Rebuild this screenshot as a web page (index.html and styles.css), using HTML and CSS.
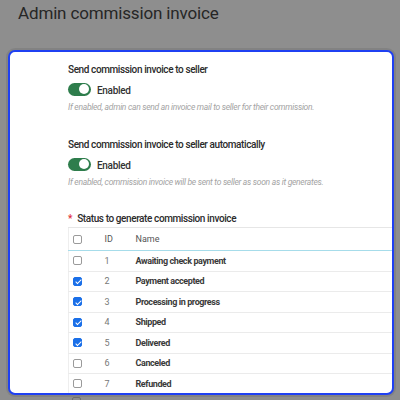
FILE: index.html
```html
<!DOCTYPE html>
<html lang="en">
<head>
    <meta charset="UTF-8">
    <title>Admin commission invoice</title>
    <link rel="stylesheet" href="styles.css">
</head>
<body>

    <h1 class="page-title">Admin commission invoice</h1>

    <div class="card">
        <div class="field">
            <div class="field-label">Send commission invoice to seller</div>
            <div class="switch-row">
                <span class="switch"><span class="knob"></span></span>
                <span class="switch-text">Enabled</span>
            </div>
            <div class="help">If enabled, admin can send an invoice mail to seller for their commission.</div>
        </div>

        <div class="field second">
            <div class="field-label">Send commission invoice to seller automatically</div>
            <div class="switch-row">
                <span class="switch"><span class="knob"></span></span>
                <span class="switch-text">Enabled</span>
            </div>
            <div class="help">If enabled, commission invoice will be sent to seller as soon as it generates.</div>
        </div>

        <div class="field-label status-label"><span class="req">*</span> Status to generate commission invoice</div>

        <table class="status-table">
            <thead>
                <tr>
                    <th class="col-check"><span class="cb"></span></th>
                    <th class="col-id">ID</th>
                    <th>Name</th>
                </tr>
            </thead>
            <tbody>
                <tr><td class="col-check"><span class="cb"></span></td><td class="col-id">1</td><td class="name">Awaiting check payment</td></tr>
                <tr><td class="col-check"><span class="cb on"></span></td><td class="col-id">2</td><td class="name">Payment accepted</td></tr>
                <tr><td class="col-check"><span class="cb on"></span></td><td class="col-id">3</td><td class="name">Processing in progress</td></tr>
                <tr><td class="col-check"><span class="cb on"></span></td><td class="col-id">4</td><td class="name">Shipped</td></tr>
                <tr><td class="col-check"><span class="cb on"></span></td><td class="col-id">5</td><td class="name">Delivered</td></tr>
                <tr><td class="col-check"><span class="cb"></span></td><td class="col-id">6</td><td class="name">Canceled</td></tr>
                <tr><td class="col-check"><span class="cb"></span></td><td class="col-id">7</td><td class="name">Refunded</td></tr>
            </tbody>
        </table>
    </div>

    <div class="below">
        <span class="cb dim"></span>
    </div>

</body>
</html>
```

FILE: styles.css
```css
* {
    box-sizing: border-box;
    margin: 0;
    padding: 0;
}
body {
    font-family: Roboto, "Noto Sans", sans-serif;
    background-color: #8e8e8e;
    color: #333;
    width: 400px;
    height: 400px;
    overflow: hidden;
}
.page-title {
    font-size: 17px;
    font-weight: 400;
    color: #262626;
    line-height: 22px;
    padding: 2px 0 0 18px;
    height: 50px;
    letter-spacing: -0.15px;
}
.card {
    margin-left: 8px;
    width: 386px;
    height: 345px;
    background-color: #ffffff;
    border: 2px solid #1f40f2;
    border-radius: 7px;
    box-shadow: 0 0 0 2px rgba(0, 0, 0, 0.08);
    padding: 11px 0 0 58px;
    overflow: hidden;
}
.field-label {
    font-size: 10px;
    font-weight: 500;
    line-height: 14px;
    color: #2b2b2b;
    letter-spacing: -0.4px;
}
.switch-row {
    display: flex;
    align-items: center;
    gap: 6px;
    margin-top: 5px;
    height: 14px;
}
.switch {
    display: flex;
    align-items: center;
    justify-content: flex-end;
    width: 23px;
    height: 13px;
    border-radius: 7px;
    background-color: #2e7d4c;
    padding: 0 2px;
}
.knob {
    width: 10px;
    height: 10px;
    border-radius: 50%;
    background-color: #ffffff;
}
.switch-text {
    font-size: 10px;
    font-weight: 500;
    color: #333;
    letter-spacing: -0.3px;
    padding-top: 2px;
}
.help {
    margin-top: 5px;
    font-size: 8.5px;
    font-style: italic;
    line-height: 12px;
    color: #a3a3a3;
    letter-spacing: -0.28px;
}
.second {
    margin-top: 25px;
}
.status-label {
    margin-top: 24px;
}
.req {
    color: #e0303a;
    margin-right: 3px;
}
.status-table {
    margin-top: 1px;
    width: 400px;
    border-collapse: collapse;
    border-top: 1px solid #e6e6e6;
    border-left: 1px solid #eeeeee;
}
.status-table th {
    height: 23px;
    text-align: left;
    font-size: 9px;
    font-weight: 400;
    color: #555;
    border-bottom: 1px solid #a6dcea;
    vertical-align: middle;
}
.status-table td {
    height: 20.5px;
    font-size: 9px;
    border-bottom: 1.5px solid #ebebeb;
    vertical-align: middle;
}
.col-check {
    width: 36px;
    padding-left: 4px;
}
.col-id {
    width: 31px;
    color: #777;
}
.name {
    font-weight: 700;
    color: #3a3a3a;
    letter-spacing: -0.4px;
}
.cb {
    display: block;
    width: 9px;
    height: 9px;
    border: 1px solid #9a9a9a;
    border-radius: 2px;
    background-color: #fff;
    position: relative;
}
.cb.on {
    background-color: #1a6fe8;
    border-color: #1a6fe8;
}
.cb.on::after {
    content: "";
    position: absolute;
    left: 2.5px;
    top: 0.5px;
    width: 2px;
    height: 5px;
    border: solid #fff;
    border-width: 0 1.5px 1.5px 0;
    transform: rotate(45deg);
}
.below {
    padding: 2px 0 0 72px;
}
.cb.dim {
    background-color: #8e8e8e;
    border-color: #6e6e6e;
}
```
